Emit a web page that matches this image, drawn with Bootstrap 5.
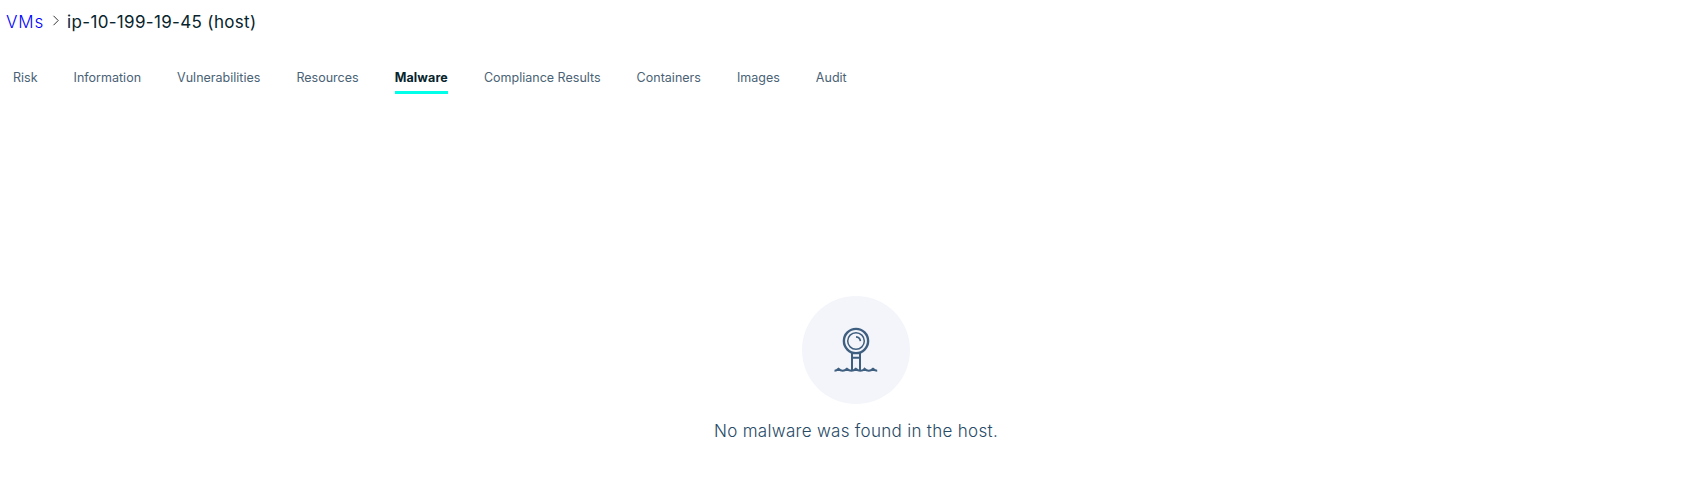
<!DOCTYPE html>
<html lang="en"><head><meta charset="utf-8"><title>VMs</title>
<link href="https://cdn.jsdelivr.net/npm/bootstrap@5.3.0/dist/css/bootstrap.min.css" rel="stylesheet">
<style>
body{font-family:Inter,sans-serif;height:502px;overflow:hidden;color:#274a66}
.crumbs{font-size:17px;line-height:24px;padding:10px 0 0 6px;color:#07242d;letter-spacing:.33px}
.crumbs a{color:#0000ff;font-weight:300;letter-spacing:.85px}
.crumbs svg{margin:5px 7px 0 8px}
.tabs{padding:33px 0 0 13px;gap:36px}
.tabs .nav-link{font-size:12.5px;line-height:22px;padding:0 0 2px;color:#4a6275;letter-spacing:.01px;border-bottom:3px solid transparent}
.tabs .nav-link.active{color:#07242d;font-weight:700;letter-spacing:.12px;border-color:#00ffe8}
.empty{padding:202px 0 0 27px}
.disc{width:108px;height:108px;background:#f3f5fa}
.empty p{font-size:17px;line-height:24px;margin:15px 0 0;font-weight:300;letter-spacing:.3px}
</style></head><body>
<nav class="crumbs d-flex"><a href="#" class="text-decoration-none">VMs</a><svg width="8" height="12" viewBox="0 0 8 12" fill="none" stroke="#333"><path d="M1.5 .8l4.7 4.7-4.7 4.7"/></svg><span>ip-10-199-19-45 (host)</span></nav>
<ul class="nav tabs"><li><a class="nav-link" href="#">Risk</a></li><li><a class="nav-link" href="#">Information</a></li><li><a class="nav-link" href="#">Vulnerabilities</a></li><li><a class="nav-link" href="#">Resources</a></li><li><a class="nav-link active" href="#">Malware</a></li><li><a class="nav-link" href="#">Compliance Results</a></li><li><a class="nav-link" href="#">Containers</a></li><li><a class="nav-link" href="#">Images</a></li><li><a class="nav-link" href="#">Audit</a></li></ul>
<main class="empty d-flex flex-column align-items-center"><div class="disc rounded-circle">
<svg class="d-block" width="108" height="108" viewBox="0 0 108 108" fill="none" stroke="#3f5f80" stroke-width="2"><circle cx="54" cy="45" r="12.1" stroke-width="2.4"/><circle cx="54" cy="45" r="8.3" stroke-width="1.5"/><path d="M54 40.9q4 .3 4.4 4.2" stroke-width="1.7"/><path d="M50 57v17M58 57v17M50 61.7h8"/><path d="M32.5 74.7q2.2 0 4-1.9 2 1.9 4.2 1.9t4.2-1.9q2 1.9 4.5 1.9t4.4-1.9q2 1.9 4.5 1.9t4.2-1.9q2 1.9 4.3 1.9t4.2-1.9q2 1.9 4.2 1.9" stroke-width="2"/></svg></div><p>No malware was found in the host.</p></main>
<script src="https://cdn.jsdelivr.net/npm/bootstrap@5.3.0/dist/js/bootstrap.bundle.min.js"></script>
</body></html>
